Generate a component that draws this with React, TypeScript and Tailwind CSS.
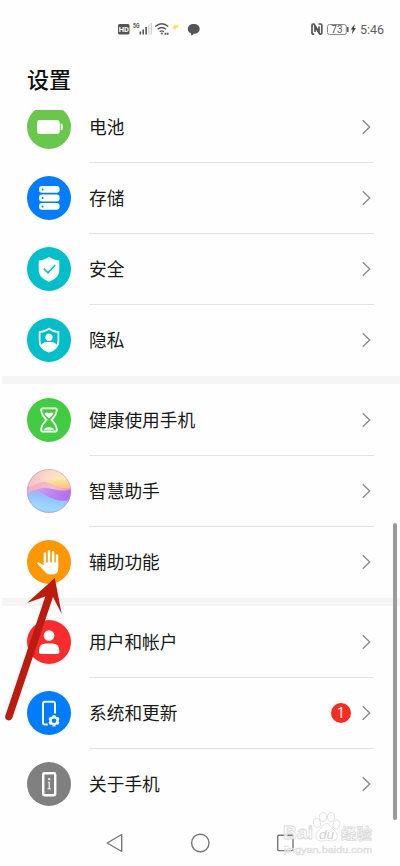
import type { ReactNode } from "react";

type Item = {
    label: string;
    bg: string;
    icon: ReactNode;
    badge?: number;
};

const BatteryIcon = (
    <g fill="#fff">
        <rect x="10" y="15" width="22.8" height="14" rx="3" />
        <path d="M33.7 18.8h.6q1.4 0 1.4 1.6v3.2q0 1.6-1.4 1.6h-.6z" />
    </g>
);

const StorageIcon = (
    <g>
        {[10, 18.6, 27].map((y) => (
            <g key={y}>
                <rect x="12" y={y} width="20.6" height="6.8" rx="3" fill="#fff" />
                <circle cx="15.6" cy={y + 3.4} r="1" fill="#007dff" />
            </g>
        ))}
    </g>
);

const SecurityIcon = (
    <g>
        <path d="M22 9.700c3 2.300 6.300 3.400 10.300 3.900v9.200c0 6-4.300 9.900-10.300 11.900-6-2-10.300-5.900-10.300-11.900v-9.200c4-.5 7.300-1.600 10.300-3.900z" fill="#fff" />
        <path d="M16.800 21.600l4.200 4.200 7.200-7.700" fill="none" stroke="#00bfc9" strokeWidth="1.500" />
    </g>
);

const PrivacyIcon = (
    <g>
        <path d="M22 10.700c2.700 2 5.800 3 9.400 3.400v8.800c0 5.300-3.900 8.900-9.400 10.800-5.500-1.900-9.400-5.500-9.400-10.800v-8.800c3.600-.4 6.700-1.400 9.400-3.400z" fill="none" stroke="#fff" strokeWidth="1.700" />
        <circle cx="22" cy="19.300" r="3.600" fill="#fff" />
        <path d="M13.800 27.500c1.300-2.300 3.300-3.500 5.700-3.500h5c2.400 0 4.400 1.200 5.700 3.500-1.500 3-4.400 5-8.200 6.400-3.800-1.400-6.700-3.400-8.200-6.400z" fill="#fff" />
    </g>
);

const HourglassIcon = (
    <g>
        <path d="M15.500 10.400h13q1.300 0 1.300 1.200c0 5-2.300 7.100-5.300 10.300 3 3.200 5.300 5.300 5.300 10.300q0 1.300-1.300 1.300h-13q-1.300 0-1.300-1.300c0-5 2.300-7.100 5.300-10.300-3-3.200-5.300-5.300-5.300-10.300q0-1.200 1.300-1.200z" fill="none" stroke="#fff" strokeWidth="1.800" />
        <path d="M17.500 15.200q2.300-1.300 4.500 0 2.200-1.300 4.500 0c-.8 2-2.500 3.300-4.500 5.400-2-2.100-3.700-3.400-4.500-5.400zM17 31.800q.2-2.600 5-2.600t5 2.600z" fill="#fff" />
    </g>
);

// Layered translucent waves inside the assistant sphere
const AssistantIcon = (
    <g>
        <defs>
            <linearGradient id="sky" x1="0" y1="0" x2="1" y2=".3">
                <stop offset="0" stopColor="#f3b9c6" />
                <stop offset=".5" stopColor="#fbdcc6" />
                <stop offset="1" stopColor="#fdf0b0" />
            </linearGradient>
            <linearGradient id="sun" x1="0" y1="0" x2="0" y2="1">
                <stop offset="0" stopColor="#fdeaa0" />
                <stop offset="1" stopColor="#fdbb85" />
            </linearGradient>
            <linearGradient id="rose" x1="0" y1="0" x2="1" y2="0">
                <stop offset="0" stopColor="#f3a6bf" />
                <stop offset=".6" stopColor="#f6b6c8" />
                <stop offset="1" stopColor="#f595a0" />
            </linearGradient>
            <linearGradient id="violet" x1="0" y1="0" x2="1" y2=".2">
                <stop offset="0" stopColor="#dcb6f2" />
                <stop offset=".5" stopColor="#c08cf3" />
                <stop offset="1" stopColor="#b36ff0" />
            </linearGradient>
            <linearGradient id="sea" x1=".7" y1="0" x2=".4" y2="1">
                <stop offset="0" stopColor="#a9a4fa" />
                <stop offset=".4" stopColor="#94c8fd" />
                <stop offset=".8" stopColor="#9adcff" />
                <stop offset="1" stopColor="#a2c0f6" />
            </linearGradient>
            <clipPath id="sphere">
                <circle cx="22" cy="22" r="22" />
            </clipPath>
        </defs>
        <g clipPath="url(#sphere)">
            <rect width="44" height="44" fill="url(#sky)" />
            <path d="M20 13c5-4 14-4 24-3v11c-9 0-18-2-24-8z" fill="url(#sun)" />
            <path d="M0 18c6 0 10-5 17-5 7 0 12 8 27 6v9H0z" fill="url(#rose)" opacity=".85" />
            <path d="M0 23c7-1 10-4 18-4 8 0 16 5 26 1v14H0z" fill="url(#violet)" />
            <path d="M0 25c6-4 13-3 20 2 7 4 15 6 24 4v13H0z" fill="url(#sea)" />
        </g>
        <circle cx="22" cy="22" r="21.500" fill="none" stroke="#b59ac0" strokeWidth=".8" opacity=".7" />
    </g>
);

const HandIcon = (
    <g stroke="#fff" strokeWidth="2.500" strokeLinecap="round" fill="#fff">
        <path d="M17.900 13.500v10M22 11.400v11M26.100 12.300v11M30 15.400v9" />
        <path d="M16.700 22.500h14.600v5.500q0 6.500-5.400 6.500h-3q-2.500 0-4.300-2.100l-7.900-8.300c-1.200-1.500.2-2.600 1.900-1.400l4.100 2.800z" stroke="none" />
    </g>
);

const UserIcon = (
    <g fill="#fff">
        <circle cx="22" cy="15.500" r="5.300" />
        <path d="M12 32.300v-1.800q0-7 7-7h6.300q7 0 7 7v1.800q0 1.700-1.700 1.700H13.700q-1.700 0-1.700-1.700z" />
    </g>
);

const SystemIcon = (
    <g>
        <path d="M28 22.500v-10q0-1.700-1.700-1.700h-8.600q-1.700 0-1.700 1.700v19.300q0 1.700 1.700 1.700h3" fill="none" stroke="#fff" strokeWidth="1.900" />
        <circle cx="27" cy="29.800" r="4.700" fill="#fff" />
        <path d="M27 24.200v11.200M22.200 27l9.600 5.600M22.200 32.600l9.600-5.600" stroke="#fff" strokeWidth="3" />
        <circle cx="27" cy="29.800" r="2.300" fill="#007dff" />
    </g>
);

const AboutIcon = (
    <g>
        <rect x="16.200" y="11.200" width="12" height="22" rx="1.200" fill="none" stroke="#fff" strokeWidth="2.400" />
        <path d="M22.200 19.700v7.300M20.900 20.200h1.300M20.600 26.700h3.200" fill="none" stroke="#fff" strokeWidth="1.100" />
        <circle cx="22.200" cy="17.200" r="1.100" fill="#fff" />
    </g>
);

const GROUPS: Item[][] = [
    [
        { label: "电池", bg: "bg-[#69c74b]", icon: BatteryIcon },
        { label: "存储", bg: "bg-[#007dff]", icon: StorageIcon },
        { label: "安全", bg: "bg-[#00bfc9]", icon: SecurityIcon },
        { label: "隐私", bg: "bg-[#00bfc9]", icon: PrivacyIcon },
    ],
    [
        { label: "健康使用手机", bg: "bg-[#41cc41]", icon: HourglassIcon },
        { label: "智慧助手", bg: "bg-transparent", icon: AssistantIcon },
        { label: "辅助功能", bg: "bg-[#ff9800]", icon: HandIcon },
    ],
    [
        { label: "用户和帐户", bg: "bg-[#fa2a2d]", icon: UserIcon },
        { label: "系统和更新", bg: "bg-[#007dff]", icon: SystemIcon, badge: 1 },
        { label: "关于手机", bg: "bg-[#808080]", icon: AboutIcon },
    ],
];

function StatusBar() {
    return (
        <header className="flex h-[58px] items-center justify-between pl-[118px] pr-4">
            <svg width="84" height="16" viewBox="0 0 84 16" className="shrink-0">
                <rect y="3" width="11.500" height="10.500" rx="1.500" fill="#555" />
                <text x="5.750" y="11" textAnchor="middle" fontSize="7.500" fontWeight="700" fill="#fff" fontFamily="Roboto, sans-serif">HD</text>
                <text x="15" y="6.800" fontSize="6.500" fontWeight="700" fill="#555" textLength="6.500" lengthAdjust="spacingAndGlyphs" fontFamily="Roboto, sans-serif">5G</text>
                <path d="M22.300 10.500v3M25.200 8.500v5M28.100 6v7.500" stroke="#555" strokeWidth="1.600" />
                <path d="M30.900 3.700v9.800M33.300 2v11.500" stroke="#ccc" strokeWidth="1.200" />
                <g fill="none" stroke="#555" strokeWidth="1.400">
                    <path d="M37.300 5.500q6.500-5.500 13 0M39.600 8.200q4.200-3.400 8.400 0M41.700 10.700q2.100-1.700 4.200 0" />
                    <path d="M46.500 12.800h4" strokeWidth="2" strokeDasharray="1.700 .6" />
                </g>
                <circle cx="43.800" cy="12.600" r="1" fill="#555" />
                <path d="M56.200 4.200l1.500.6 3-1.900-1.100 2.600 1 .9-2.300.2-1.400 2.900-.7-2.300-2.200.5 1.500-1.700z" fill="#f3e04c" />
                <path d="M75.700 3c3.500 0 6 2 6 4.900 0 2.800-2.500 4.800-6 4.800-.5 1-1.500 1.500-3 1.600.5-.7.6-1.200.4-1.900-2-.8-3.300-2.400-3.300-4.500 0-2.900 2.500-4.900 5.900-4.900z" fill="#555" />
            </svg>
            <div className="flex items-center">
                <svg width="49" height="16" viewBox="0 0 49 16">
                    <g fill="none" stroke="#555" strokeWidth="1.700" strokeLinejoin="round">
                        <path d="M4.200 13.200H3.300Q2 13.200 2 12V4.200Q2 3 3.200 3H4L9 11.500V5.500" />
                        <path d="M8.500 3h2.100q1.200 0 1.200 1.200V12q0 1.200-1.200 1.200H10L5 5.500V11" />
                    </g>
                    <rect x="17.500" y="3.500" width="18.800" height="10" rx="2" fill="none" stroke="#888" />
                    <path d="M37.800 6v5" stroke="#555" strokeWidth="1.500" />
                    <text x="26.900" y="12" textAnchor="middle" fontSize="10" fill="#555" fontFamily="Roboto, sans-serif">73</text>
                    <path d="M44.800 3l-4 5.600h1.900l-.8 4.600 4-6.100h-1.900z" fill="#444" />
                </svg>
                <span className="ml-px mt-px text-[12.500px] leading-4 text-[#606060]">5:46</span>
            </div>
        </header>
    );
}

function Row({ item, last }: { item: Item; last: boolean }) {
    return (
        <li className="flex h-[71px] pl-[27px] pr-[26px]">
            <div className={`mt-[13px] size-11 shrink-0 rounded-full ${item.bg}`}>
                <svg width="44" height="44" viewBox="0 0 44 44">{item.icon}</svg>
            </div>
            <div className={`ml-[18px] flex flex-1 items-center border-b ${last ? "border-transparent" : "border-[#e3e3e3]"}`}>
                <span className="flex-1 pt-0.5 text-[17.700px] leading-6 text-[#191919]">{item.label}</span>
                {item.badge && (
                    <span className="mr-[11px] flex size-5 items-center justify-center rounded-full bg-[#fa2a1c] text-sm leading-none text-white">
                        {item.badge}
                    </span>
                )}
                <svg width="9" height="16" viewBox="0 0 9 16" className="mr-[3px]" fill="none" stroke="#8c8c8c" strokeWidth="1.400">
                    <path d="M.8 1.200L7.700 8 .8 14.800" />
                </svg>
            </div>
        </li>
    );
}

function NavBar() {
    return (
        <nav className="flex h-[46px] items-center justify-between px-[106px]">
            <svg width="18" height="20" viewBox="0 0 18 20" fill="none" stroke="#777" strokeWidth="1.400" strokeLinejoin="round">
                <path d="M15.700 1.500v17L1.200 10z" />
            </svg>
            <svg width="20" height="20" viewBox="0 0 20 20" fill="none" stroke="#777" strokeWidth="1.400">
                <circle cx="10.300" cy="10" r="8.700" />
            </svg>
            <svg width="18" height="20" viewBox="0 0 18 20" fill="none" stroke="#777" strokeWidth="1.400">
                <rect x="1.700" y="2.300" width="15.300" height="15.300" rx="1" />
            </svg>
        </nav>
    );
}

function Watermark() {
    return (
        <svg className="absolute left-[280px] top-[808px]" width="100" height="50" viewBox="0 0 100 50" fontFamily="'Liberation Sans', 'Noto Sans CJK SC', sans-serif">
            <g fill="#fff" fillOpacity=".75" stroke="#dadada" strokeWidth=".8">
                <text x="3" y="31" fontSize="19" fontWeight="700" textLength="30" lengthAdjust="spacingAndGlyphs">Bai</text>
                <ellipse cx="37" cy="15" rx="3.500" ry="4.500" transform="rotate(-15 37 15)" />
                <ellipse cx="43" cy="9" rx="3.500" ry="4.500" />
                <ellipse cx="51" cy="9" rx="3.500" ry="4.500" />
                <ellipse cx="56.500" cy="16.500" rx="3.300" ry="4.500" transform="rotate(15 56.500 16.500)" />
                <path d="M46.500 15.500c3.500 0 4.500 4 7.500 6.500 5 4 4 11-2 11-2.500 0-3.500-.8-5.500-.8s-3 .8-5.500.8c-6 0-7-7-2-11 3-2.500 4-6.500 7.500-6.500z" />
                <text x="61" y="30.500" fontSize="15" fontWeight="700" textLength="31" lengthAdjust="spacingAndGlyphs">经验</text>
            </g>
            <text x="39" y="30.500" fontSize="13" fontStyle="italic" fill="#cfcfcf" textLength="15" lengthAdjust="spacingAndGlyphs">du</text>
            <text x="4" y="45" fontSize="9" fill="#fff" fillOpacity=".8" stroke="#dedede" strokeWidth=".6" textLength="88" lengthAdjust="spacingAndGlyphs">jingyan.baidu.com</text>
        </svg>
    );
}

export default function App() {
    return (
        <main className="relative flex h-[866px] w-[400px] flex-col overflow-hidden bg-[#fefefe] font-[Roboto,'Noto_Sans_CJK_SC',sans-serif]">
            <StatusBar />
            <h1 className="h-[52px] shrink-0 pl-[27px] pt-[7px] text-[22px] font-medium leading-8 text-[#111]">设置</h1>

            {/* List is scrolled, so the first row is cut by the title */}
            <div className="h-[710px] shrink-0 overflow-hidden">
                <div className="-mt-[18px]">
                    {GROUPS.map((group, i) => (
                        <section key={i}>
                            {i > 0 && <div className="mb-px ml-0.5 h-2 bg-[#f5f5f5]" />}
                            <ul>
                                {group.map((item, j) => (
                                    <Row key={item.label} item={item} last={j === group.length - 1} />
                                ))}
                            </ul>
                        </section>
                    ))}
                </div>
            </div>

            <NavBar />

            {/* Scrollbar thumb */}
            <div className="absolute left-[393px] top-[523px] h-[297px] w-1 rounded-full bg-[#9b9b9b]" />

            {/* Pointer to the accessibility row */}
            <svg className="absolute left-0 top-[570px]" width="80" height="160" viewBox="0 0 80 160">
                <path d="M54.800 8L27 33l18.300-6.500L5.300 145.800c-1.200 4.500 5.200 6.600 7 2.200L53 27 61.700 44z" fill="#bb1c10" />
            </svg>

            <Watermark />
        </main>
    );
}
